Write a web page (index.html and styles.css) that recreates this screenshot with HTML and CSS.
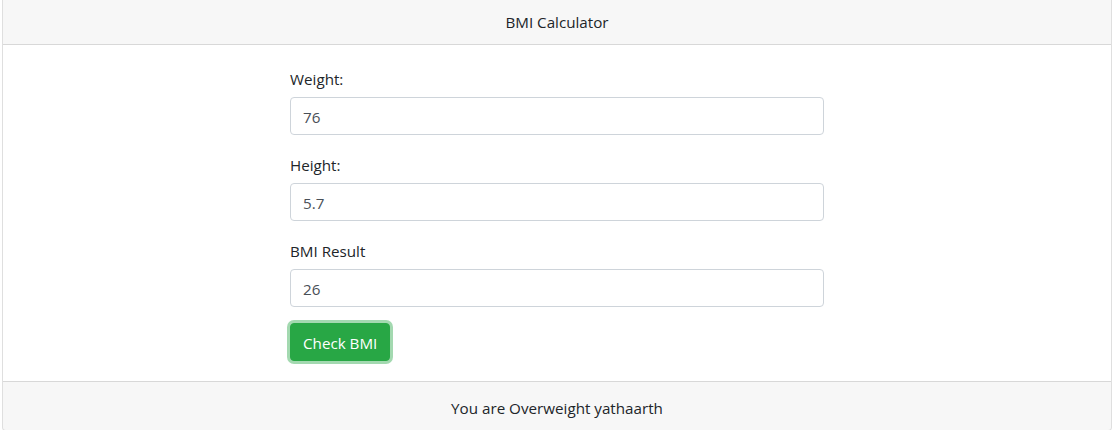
FILE: index.html
```html
<!DOCTYPE html>
<html lang="en">
<head>
<meta charset="utf-8">
<title>BMI Calculator</title>
<link rel="stylesheet" href="styles.css">
</head>
<body>
<div class="card">
  <div class="card-header">BMI Calculator</div>
  <div class="card-body">
    <form class="form">
      <div class="form-group">
        <label for="weight">Weight:</label>
        <input id="weight" class="form-control" type="text" value="76">
      </div>
      <div class="form-group">
        <label for="height">Height:</label>
        <input id="height" class="form-control" type="text" value="5.7">
      </div>
      <div class="form-group">
        <label for="result">BMI Result</label>
        <input id="result" class="form-control" type="text" value="26">
      </div>
      <button type="button" class="btn btn-success">Check BMI</button>
    </form>
  </div>
  <div class="card-footer">You are Overweight yathaarth</div>
</div>
</body>
</html>
```

FILE: styles.css
```css
* { box-sizing: border-box; }
html, body { margin: 0; padding: 0; }
body {
  font-family: "Segoe UI", "Open Sans", "Noto Sans", sans-serif;
  font-size: 15.2px;
  line-height: 24px;
  color: #212529;
  background: #fff;
}
.card {
  margin: -5px 3px 0 2px;
  border: 1px solid rgba(0,0,0,.125);
  border-radius: 4px;
  background: #fff;
  overflow: hidden;
}
.card-header {
  padding: 14px 20px 10px;
  background: rgba(0,0,0,.03);
  border-bottom: 1px solid rgba(0,0,0,.125);
  text-align: center;
}
.card-body {
  padding: 20px;
}
.form {
  width: 50%;
  margin: 0 auto;
}
.form-group {
  margin-bottom: 16px;
}
label {
  display: block;
  padding-top: 2px;
  margin-bottom: 6px;
}
.form-control {
  display: block;
  width: 100%;
  height: 38px;
  padding: 7px 12px 5px;
  font: inherit;
  color: #495057;
  border: 1px solid #ced4da;
  border-radius: 4px;
  background: #fff;
}
.btn {
  display: inline-block;
  height: 38px;
  padding: 7px 12px 5px;
  font: inherit;
  border: 1px solid #28a745;
  border-radius: 4px;
  background: #28a745;
  color: #fff;
  box-shadow: 0 0 0 3px rgba(72,180,97,.5);
  cursor: pointer;
}
.card-footer {
  padding: 14px 20px 10px;
  background: rgba(0,0,0,.03);
  border-top: 1px solid rgba(0,0,0,.125);
  text-align: center;
}
```
